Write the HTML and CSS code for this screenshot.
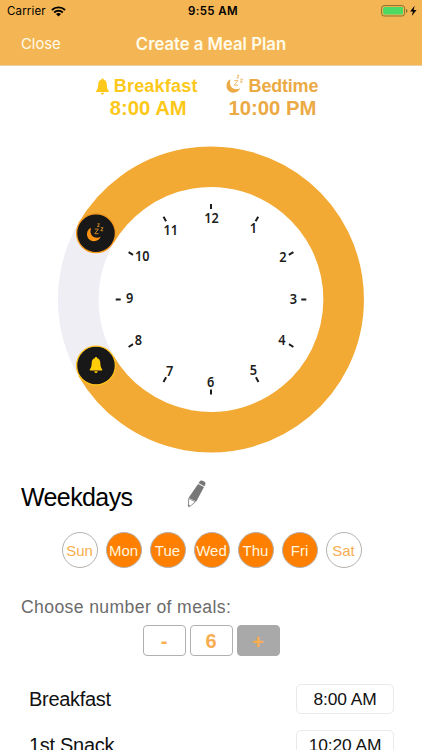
FILE: index.html
```html
<!DOCTYPE html>
<html lang="en">
<head>
    <meta charset="utf-8">
    <title>Create a Meal Plan</title>
    <link rel="stylesheet" href="styles.css">
</head>
<body>
    <svg class="defs" width="0" height="0">
        <symbol id="bell" viewBox="0 0 14 18">
            <path d="M7 .3c.8 0 1.300.5 1.300 1.300 2.200.6 3.100 2.300 3.300 4.600.2 4 .6 5.900 2.200 7.400v1.200H.2v-1.200c1.600-1.500 2-3.400 2.200-7.400.2-2.300 1.100-4 3.300-4.600C5.700.8 6.200.3 7 .3zM5.200 15.600h3.600c-.1 1.200-.8 1.900-1.800 1.900s-1.700-.7-1.800-1.900z"/>
        </symbol>
        <symbol id="moon" viewBox="0 0 18 20">
            <path d="M4.600 5.300C2 6.500.5 8.800.5 11.700c0 3.900 3.100 7 7 7 3.100 0 5.700-1.900 6.700-4.700-1 .8-2.300 1.200-3.700 1.200-3.700 0-6.500-2.700-6.500-6.200 0-1.400.2-2.600.6-3.700z"/>
            <path class="zs" d="M8.300 6.600h3.600l-3.600 4.600h3.700M11 1.300h2l-2 2.700h2M14.300 5.200h2.300l-2.300 3h2.400"/>
        </symbol>
    </svg>

    <div class="header">
        <div class="status-bar">
            <div class="carrier">
                <span>Carrier</span>
                <svg width="15" height="11" viewBox="0 0 15 11">
                    <path d="M.9 4a9.700 9.700 0 0 1 13.200 0M3.200 6.500a6.300 6.300 0 0 1 8.600 0" fill="none" stroke="#000" stroke-width="1.900"/>
                    <path d="M7.500 10.600L5 8.100a3.600 3.600 0 0 1 5 0z"/>
                </svg>
            </div>
            <div class="clock-time">9:55 AM</div>
            <div class="battery">
                <svg width="37" height="12" viewBox="0 0 37 12">
                    <rect x=".6" y=".6" width="23" height="10.400" rx="2.500" fill="none" stroke="#8d7031"/>
                    <rect x="2.100" y="2.100" width="20" height="7.400" rx="1.300" fill="#4cd964"/>
                    <path d="M25 4v3.800c1.100-.4 1.500-1.100 1.500-1.900S26.100 4.400 25 4z" fill="#8d7031"/>
                    <path d="M33.600.8l-4.500 5.700h2.800l-1.100 4.500 4.700-5.900h-2.900z"/>
                </svg>
            </div>
        </div>
        <div class="nav-bar">
            <div class="close">Close</div>
            <div class="title">Create a Meal Plan</div>
            <div></div>
        </div>
    </div>

    <div class="times">
        <div class="time-box breakfast">
            <div class="time-label"><svg class="bell-icon"><use href="#bell"/></svg><span>Breakfast</span></div>
            <div class="time-value">8:00 AM</div>
        </div>
        <div class="time-box bedtime">
            <div class="time-label"><svg class="moon-icon"><use href="#moon"/></svg><span>Bedtime</span></div>
            <div class="time-value">10:00 PM</div>
        </div>
    </div>

    <svg class="dial" viewBox="58 146 306 307">
        <path d="M96 365.800A132.700 132.700 0 1 0 96 233.200" fill="none" stroke="#f2aa35" stroke-width="40.600"/>
        <path d="M96 365.800A132.700 132.700 0 0 1 96 233.200" fill="none" stroke="#efeef5" stroke-width="40.600"/>
        <path class="ticks" d="M211 204v5M258.200 216.700l-2.600 4.500M293.400 252.200l-4.600 2.600M301.300 299.500h5M289 344.200l4.400 2.800M255.900 377.300l2.600 4.600M211 389.500v5M166.100 377.300l-2.600 4.600M133 344.200l-4.400 2.800M115.700 299.500h5M128.600 252.200l4.400 2.600M163.500 216.700l2.600 4.500"/>
        <g class="hours">
            <text x="211.500" y="223.300" textLength="14.500" lengthAdjust="spacingAndGlyphs">12</text>
            <text x="253.500" y="233" textLength="7.300" lengthAdjust="spacingAndGlyphs">1</text>
            <text x="283" y="261.800" textLength="7.300" lengthAdjust="spacingAndGlyphs">2</text>
            <text x="293.300" y="303.800" textLength="7.300" lengthAdjust="spacingAndGlyphs">3</text>
            <text x="282" y="344.500" textLength="7.300" lengthAdjust="spacingAndGlyphs">4</text>
            <text x="253.300" y="375" textLength="7.300" lengthAdjust="spacingAndGlyphs">5</text>
            <text x="210.700" y="386.700" textLength="7.300" lengthAdjust="spacingAndGlyphs">6</text>
            <text x="169.700" y="376" textLength="7.300" lengthAdjust="spacingAndGlyphs">7</text>
            <text x="138.500" y="344.500" textLength="7.300" lengthAdjust="spacingAndGlyphs">8</text>
            <text x="129.700" y="302.500" textLength="7.300" lengthAdjust="spacingAndGlyphs">9</text>
            <text x="142.300" y="261" textLength="14.500" lengthAdjust="spacingAndGlyphs">10</text>
            <text x="170.700" y="235" textLength="14.500" lengthAdjust="spacingAndGlyphs">11</text>
        </g>
        <circle class="knob" cx="96" cy="233.200" r="19.400" stroke="#f79b1c"/>
        <use class="knob-moon" href="#moon" x="86.500" y="222.500" width="18" height="20"/>
        <circle class="knob" cx="96" cy="365.600" r="19.400" stroke="#ffc31b"/>
        <use class="knob-bell" href="#bell" x="89.500" y="356.500" width="13" height="17"/>
    </svg>

    <div class="plan-name">
        <span>Weekdays</span>
        <svg width="19" height="28" viewBox="0 0 19 28">
            <path d="M12.300 1.900c.9-1.500 2.200-1.800 4.100-.8s2.600 2.200 1.800 3.700l-.8 1.400-5.900-3.100z" fill="#777"/>
            <path d="M11.100 3.900l5.900 3.100-7.700 14.500-7.700-3.700z" fill="#777"/>
            <path d="M1.600 18.500l6.900 3.300-5.600 4.700c-.8.500-1.400.2-1.500-.5z" fill="#fff" stroke="#777" stroke-width=".8"/>
            <path d="M1.200 24.200l2 1-1.800 1.500z" fill="#777"/>
        </svg>
    </div>

    <div class="days">
        <div class="day">Sun</div>
        <div class="day on">Mon</div>
        <div class="day on">Tue</div>
        <div class="day on">Wed</div>
        <div class="day on">Thu</div>
        <div class="day on">Fri</div>
        <div class="day">Sat</div>
    </div>

    <div class="choose">Choose number of meals:</div>
    <div class="stepper">
        <div class="step">-</div>
        <div class="step">6</div>
        <div class="step disabled">+</div>
    </div>

    <div class="meals">
        <div class="meal"><span>Breakfast</span><div class="meal-time">8:00 AM</div></div>
        <div class="meal"><span>1st Snack</span><div class="meal-time">10:20 AM</div></div>
    </div>
</body>
</html>
```

FILE: styles.css
```css
html, body {
    height: 750px;
    overflow: hidden;
}
body {
    margin: 0;
    background-color: #ffffff;
    color: #000000;
    font-family: "Liberation Sans", Arial, sans-serif;
}
svg {
    display: block;
    flex: none;
}
.defs {
    height: 0;
}
.header {
    height: 65px;
    background-color: #f4b654;
    border-bottom: 1px solid #e8cfa4;
}
.status-bar, .nav-bar {
    display: grid;
    grid-template-columns: 1fr auto 1fr;
    align-items: center;
}
.status-bar {
    height: 22px;
    padding: 0 4px 0 7px;
    font-family: Inter, sans-serif;
    font-size: 11.5px;
}
.carrier {
    display: flex;
    align-items: center;
    gap: 5px;
}
.carrier span {
    letter-spacing: 0.15px;
}
.clock-time {
    font-weight: 600;
    letter-spacing: 0.4px;
    padding-left: 1px;
}
.battery {
    justify-self: end;
}
.nav-bar {
    height: 43px;
    padding: 0 21px;
    color: #fffbea;
    font-family: Inter, sans-serif;
    font-size: 16.7px;
}
.close {
    font-size: 14.8px;
}
.title {
    font-weight: 600;
}
.times {
    display: flex;
    justify-content: center;
    gap: 28px;
    height: 80px;
    box-sizing: border-box;
    padding: 9px 8px 0 0;
    font-weight: bold;
}
.time-box {
    display: flex;
    flex-direction: column;
    align-items: center;
}
.breakfast {
    color: #fcc81a;
}
.bedtime {
    color: #ebaa45;
}
.time-label {
    display: flex;
    align-items: center;
    height: 22px;
    font-size: 18px;
    letter-spacing: 0.2px;
}
.bedtime .time-label {
    letter-spacing: -0.2px;
}
.time-value {
    height: 22px;
    line-height: 22px;
    font-size: 20.3px;
}
.breakfast .time-value {
    padding-left: 3px;
}
.bedtime .time-value {
    padding-left: 1px;
}
.bell-icon {
    width: 13px;
    height: 17px;
    margin-right: 5px;
    fill: currentColor;
}
.moon-icon {
    width: 18px;
    height: 20px;
    margin: -4px 5px 0 0;
    fill: currentColor;
    color: #ebaa45;
}
.zs {
    fill: none;
    stroke: currentColor;
    stroke-width: 0.8;
}
.dial {
    width: 306px;
    height: 307px;
    margin: 0 auto;
}
.ticks {
    stroke: #1c1c1c;
    stroke-width: 2;
}
.hours text {
    font-family: "Noto Sans", sans-serif;
    font-size: 14px;
    font-weight: 600;
    fill: #1c1c1c;
    text-anchor: middle;
}
.knob {
    fill: #181818;
    stroke-width: 1.3;
}
.knob-moon {
    color: #f29a22;
    fill: #ff9414;
}
.knob-bell {
    fill: #ffcd0a;
}
.plan-name {
    display: flex;
    align-items: center;
    height: 28px;
    margin: 27px 0 0 21px;
    font-size: 25px;
}
.plan-name span {
    width: 166px;
    padding-top: 6px;
    box-sizing: border-box;
    letter-spacing: -0.6px;
}
.days {
    display: flex;
    justify-content: center;
    gap: 8px;
    margin-top: 24px;
    padding-left: 1px;
}
.day {
    width: 36px;
    height: 36px;
    box-sizing: border-box;
    border: 1px solid #b5b0ab;
    border-radius: 50%;
    display: flex;
    align-items: center;
    justify-content: center;
    font-size: 15px;
    color: #f8ae50;
}
.on {
    background-color: #ff8000;
    color: #fff5df;
}
.choose {
    margin: 29px 0 0 21px;
    height: 20px;
    line-height: 20px;
    font-size: 17.6px;
    letter-spacing: 0.38px;
    color: #6b6b6b;
}
.stepper {
    display: flex;
    justify-content: center;
    gap: 4px;
    margin-top: 8px;
}
.step {
    width: 43px;
    height: 31px;
    box-sizing: border-box;
    border: 1px solid #b0b0b0;
    border-radius: 4px;
    text-align: center;
    line-height: 31px;
    font-size: 20px;
    font-weight: bold;
    color: #f8ae50;
}
.disabled {
    background-color: #a9a9a9;
    border-color: #a9a9a9;
    line-height: 33px;
}
.meals {
    margin-top: 28px;
    padding: 0 28px 0 29px;
}
.meal {
    display: flex;
    justify-content: space-between;
    align-items: center;
    height: 30px;
    margin-bottom: 16px;
    font-size: 20px;
    letter-spacing: -0.3px;
    color: #111111;
}
.meal span {
    padding-top: 0;
}
.meal-time {
    width: 98px;
    height: 30px;
    box-sizing: border-box;
    border: 1px solid #e9e9e9;
    border-radius: 5px;
    text-align: center;
    line-height: 29px;
    font-size: 17.4px;
    letter-spacing: -0.1px;
}
```
